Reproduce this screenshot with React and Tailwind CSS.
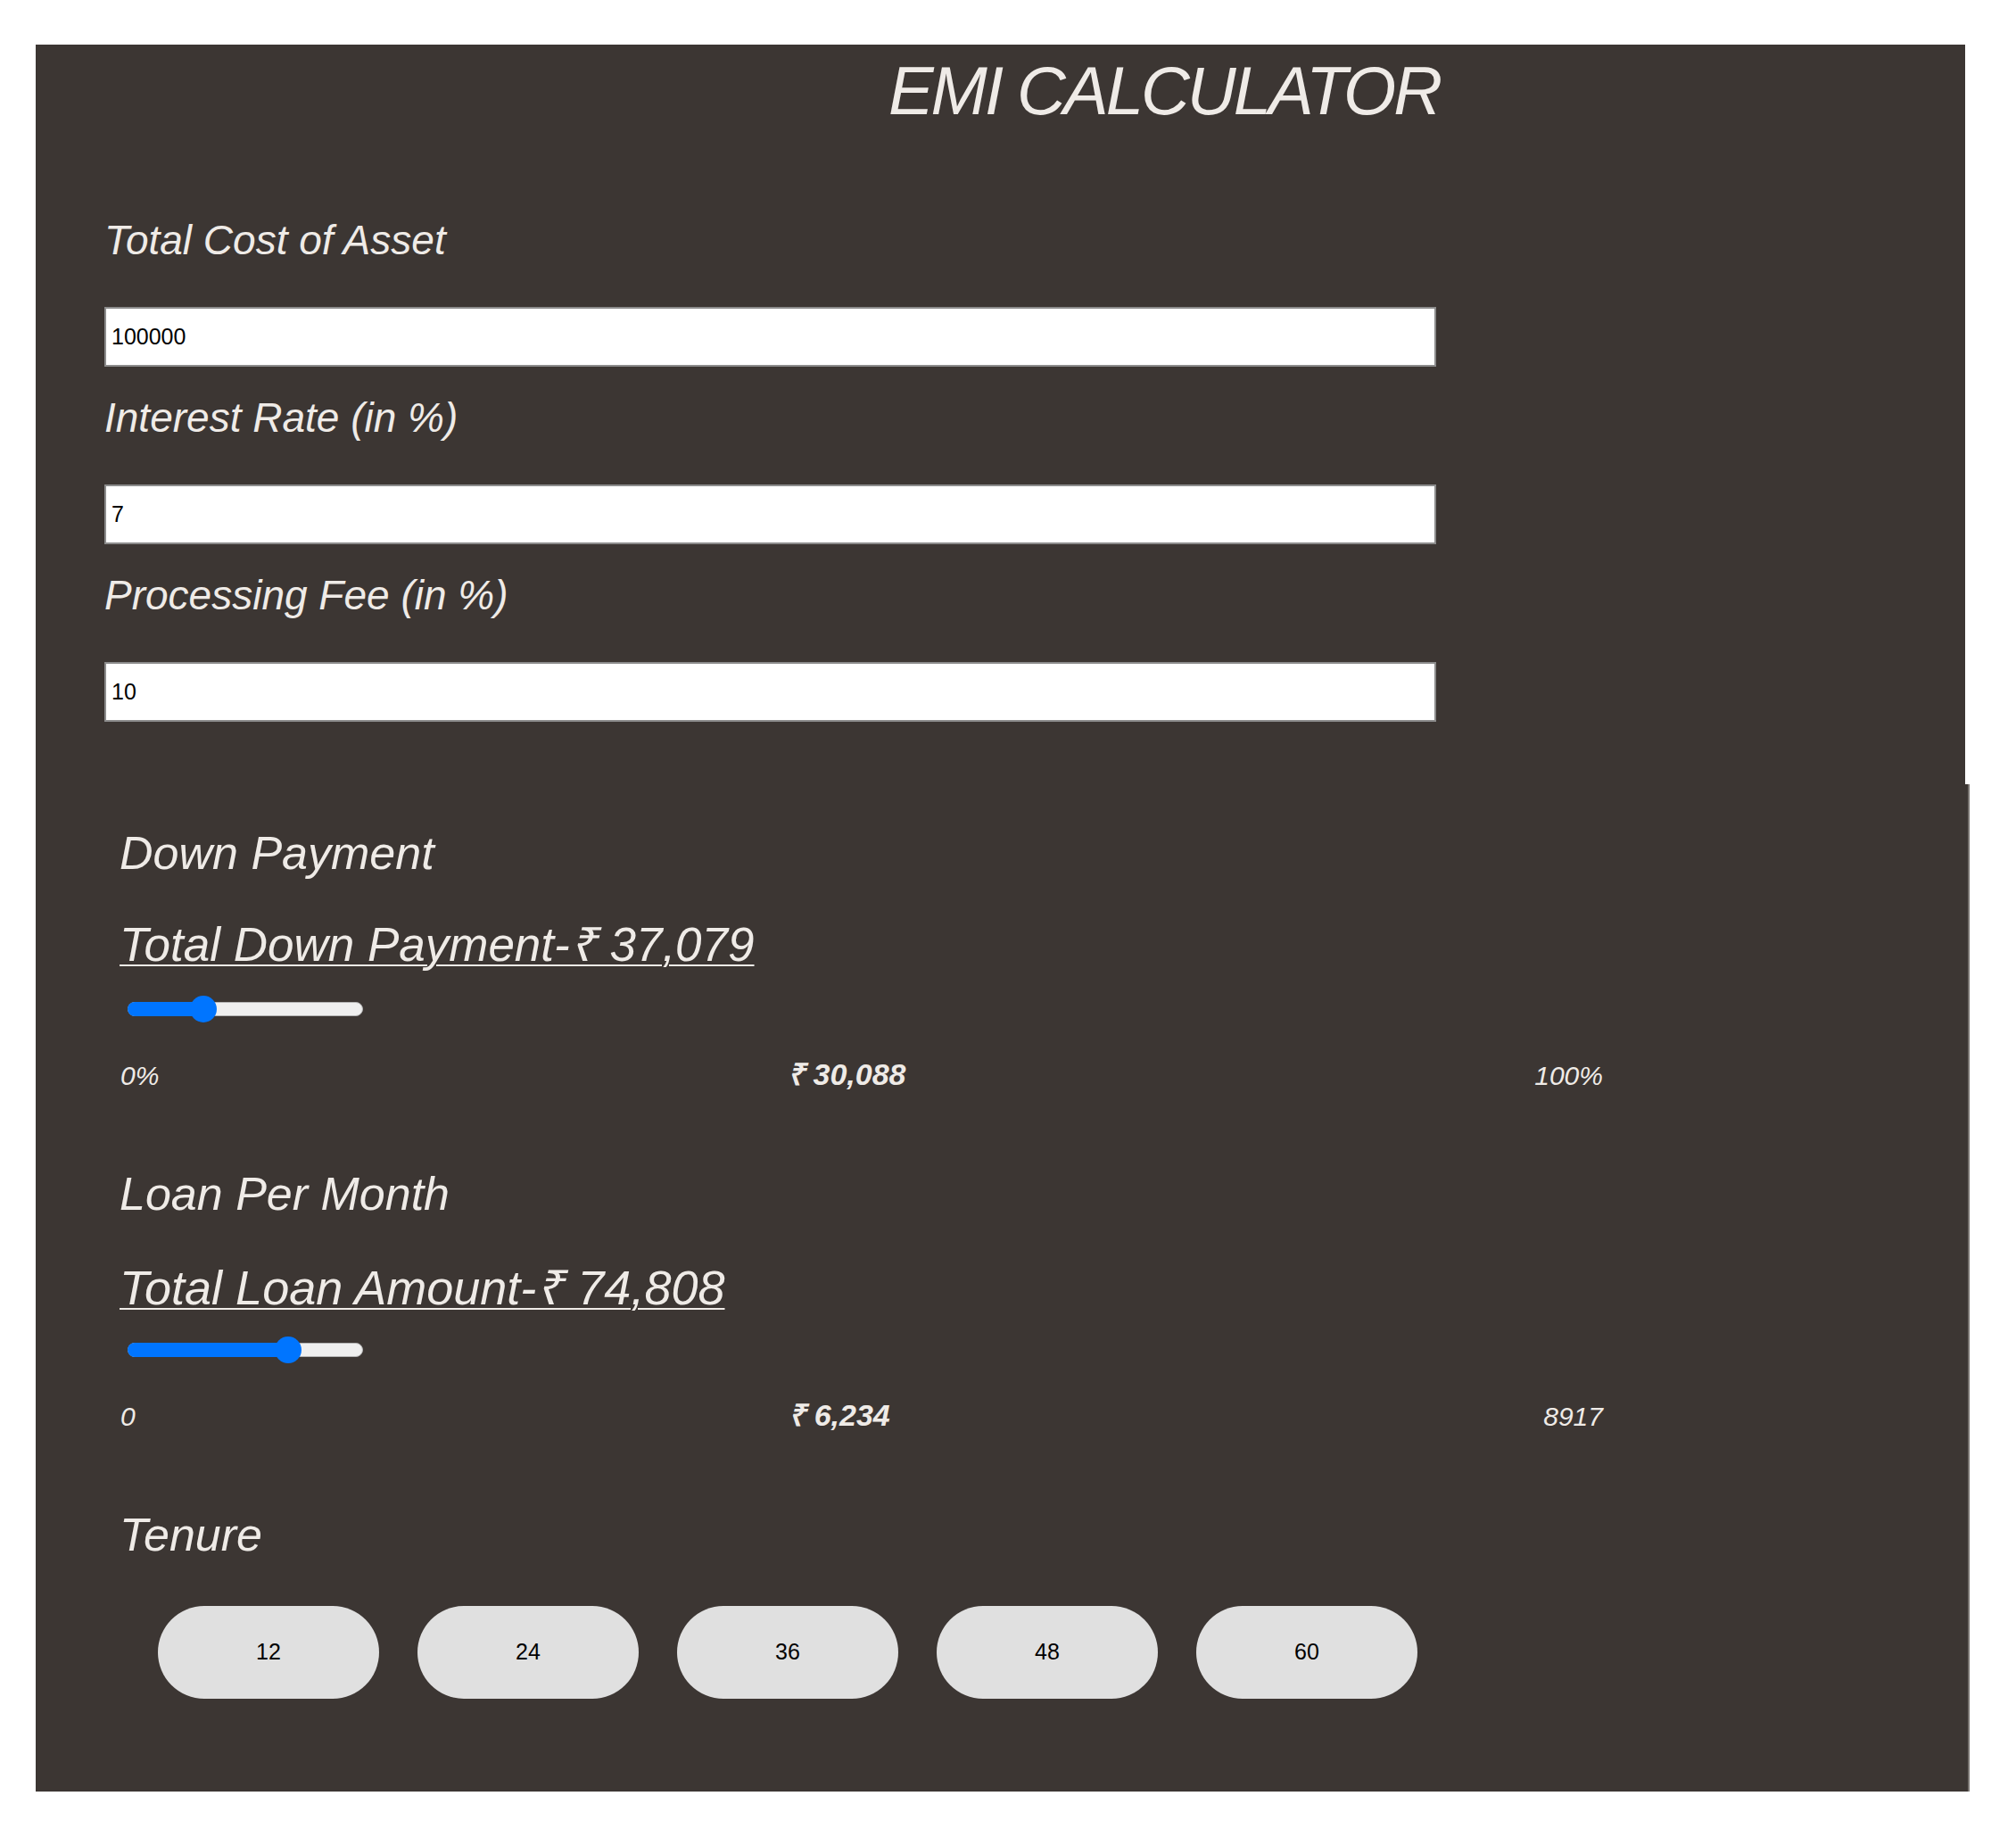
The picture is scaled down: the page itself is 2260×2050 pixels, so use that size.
import { useState } from "react";

const TENURES = [12, 24, 36, 48, 60];

// fake range bar, drawn with divs so the size matches
function RangeBar({ thumbLeft }) {
  return (
    <div className="relative ml-[9px] h-[30px] w-[264px]">
      <div className="absolute left-0 right-0 top-[7px] h-[16px] rounded-full border border-[#b3b3b3] bg-[#efefef]" />
      <div
        className="absolute left-0 top-[7px] h-[16px] rounded-full bg-[#0075ff]"
        style={{ width: thumbLeft + 15 }}
      />
      <div
        className="absolute top-0 h-[30px] w-[30px] rounded-full bg-[#0075ff]"
        style={{ left: thumbLeft }}
      />
    </div>
  );
}

function ScaleRow({ left, mid, right }) {
  return (
    <div className="mt-[41px] ml-[1px] flex w-[1662px] items-baseline justify-between italic leading-none">
      <span className="text-[30px]">{left}</span>
      <span className="text-[34px] font-bold">{mid}</span>
      <span className="text-[30px]">{right}</span>
    </div>
  );
}

export default function App() {
  const [form, setForm] = useState({
    cost: "100000",
    interest: "7",
    fee: "10",
  });
  const [tenure, setTenure] = useState(null);

  const fields = [
    { key: "cost", label: "Total Cost of Asset" },
    { key: "interest", label: "Interest Rate (in %)" },
    { key: "fee", label: "Processing Fee (in %)" },
  ];

  return (
    <div className="min-h-screen bg-white pl-[40px] pt-[50px] pb-[42px] font-['Liberation_Sans',Arial,sans-serif] text-[#efebe7]">

      {/* top part with inputs */}
      <div className="h-[829px] w-[2163px] bg-[#3c3633] pl-[77px] pt-[14px]">
        <h1 className="ml-[838px] w-[700px] whitespace-nowrap text-center text-[76px] italic leading-none tracking-[-3px]">
          EMI CALCULATOR
        </h1>

        <div className="mt-[106px]">
          {fields.map((f, i) => (
            <div key={f.key} className={i > 0 ? "mt-[34px]" : ""}>
              <label className="block text-[46px] italic leading-none">
                {f.label}
              </label>
              <input
                type="number"
                value={form[f.key]}
                onChange={(e) =>
                  setForm({
                    ...form,
                    [f.key]: e.target.value,
                  })
                }
                className="mt-[52px] block h-[67px] w-[1493px] border-2 border-[#8c8c8c] bg-white px-[6px] text-[25px] text-black outline-none"
              />
            </div>
          ))}
        </div>
      </div>

      {/* bottom part */}
      <div className="h-[1129px] w-[2168px] border-r-2 border-[#77726f] bg-[#3c3633] pl-[94px] pt-[51px]">
        <h2 className="text-[52px] italic leading-none">Down Payment</h2>
        <p className="mt-[50px] text-[53px] italic leading-none underline decoration-[2px] underline-offset-[4px]">
          Total Down Payment-₹ 37,079
        </p>
        <div className="mt-[31px]">
          <RangeBar thumbLeft={70} />
        </div>
        <ScaleRow left="0%" mid="₹ 30,088" right="100%" />

        <h2 className="mt-[91px] text-[52px] italic leading-none">Loan Per Month</h2>
        <p className="mt-[52px] text-[54px] italic leading-none underline decoration-[2px] underline-offset-[4px]">
          Total Loan Amount-₹ 74,808
        </p>
        <div className="mt-[28px]">
          <RangeBar thumbLeft={165} />
        </div>
        <ScaleRow left="0" mid="₹ 6,234" right="8917" />

        <h2 className="mt-[91px] text-[52px] italic leading-none">Tenure</h2>
        <div className="mt-[54px] ml-[43px] flex gap-[43px]">
          {TENURES.map((t) => (
            <button
              key={t}
              onClick={() => setTenure(t)}
              className={
                tenure === t
                  ? "h-[104px] w-[248px] rounded-full bg-[#c8c8c8] text-[25px] text-black"
                  : "h-[104px] w-[248px] rounded-full bg-[#e0e0e0] text-[25px] text-black"
              }
            >
              {t}
            </button>
          ))}
        </div>
      </div>
    </div>
  );
}
